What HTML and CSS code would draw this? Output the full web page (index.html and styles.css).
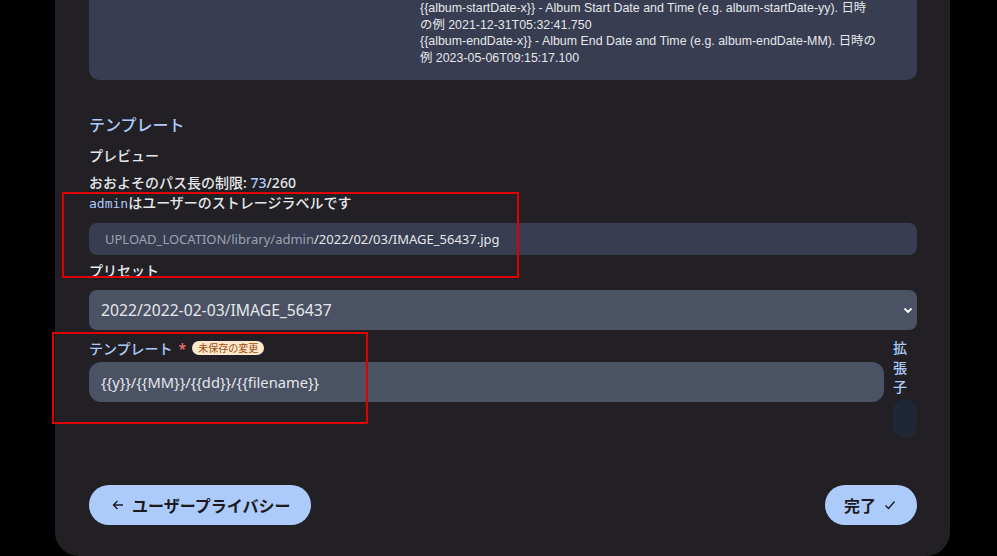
FILE: index.html
```html
<!DOCTYPE html>
<html lang="ja">
<head>
    <meta charset="UTF-8">
    <meta name="viewport" content="width=device-width, initial-scale=1.0">
    <title>ストレージテンプレート</title>
    <link rel="stylesheet" href="styles.css">
</head>
<body>
    <div class="panel">
        <div class="vars">
            <div class="vars-text">
                <p>{{album-startDate-x}} - Album Start Date and Time (e.g. album-startDate-yy). 日時<br>の例 2021-12-31T05:32:41.750</p>
                <p>{{album-endDate-x}} - Album End Date and Time (e.g. album-endDate-MM). 日時の<br>例 2023-05-06T09:15:17.100</p>
            </div>
        </div>

        <h3 class="section-title">テンプレート</h3>
        <p class="label">プレビュー</p>
        <p class="label">おおよそのパス長の制限: <span class="accent">73</span>/260</p>
        <p class="label label-tight"><code class="accent">admin</code>はユーザーのストレージラベルです</p>

        <div class="preview">
            <span class="muted">UPLOAD_LOCATION/library/admin</span>/2022/02/03/IMAGE_56437.jpg
        </div>

        <p class="label preset-label">プリセット</p>
        <div class="select">
            <span>2022/2022-02-03/IMAGE_56437</span>
            <svg width="10" height="10" viewBox="0 0 10 10"><path d="M1.5 3.5 5 7 8.5 3.5" fill="none" stroke="#fff" stroke-width="1.8"/></svg>
        </div>

        <div class="template-row">
            <div class="template-main">
                <div class="template-label">
                    <span class="accent">テンプレート</span>
                    <span class="required">*</span>
                    <span class="badge">未保存の変更</span>
                </div>
                <div class="input">{{y}}/{{MM}}/{{dd}}/{{filename}}</div>
            </div>
            <div class="ext">
                <span class="ext-label">拡張子</span>
                <div class="ext-input"></div>
            </div>
        </div>

        <div class="actions">
            <button class="btn btn-back">
                <svg width="14" height="14" viewBox="0 0 14 14"><path d="M12 7H2.5M6.5 3 2.5 7l4 4" fill="none" stroke="#1b1b1f" stroke-width="1.4"/></svg>
                ユーザープライバシー
            </button>
            <button class="btn btn-done">
                完了
                <svg width="14" height="14" viewBox="0 0 14 14"><path d="M2.5 7.5 5.5 10.5 11.5 3.5" fill="none" stroke="#1b1b1f" stroke-width="1.4"/></svg>
            </button>
        </div>

        <div class="mark mark-preview"></div>
        <div class="mark mark-template"></div>
    </div>
</body>
</html>
```

FILE: styles.css
```css
body {
    margin: 0;
    background: #000;
    font-family: "Noto Sans", "Noto Sans CJK JP", sans-serif;
    color: #e5e7eb;
    overflow: hidden;
}

p {
    margin: 0;
}

.panel {
    position: relative;
    width: 895px;
    height: 556px;
    margin-left: 55px;
    padding: 0 33px 0 34px;
    box-sizing: border-box;
    background: #222024;
    border-radius: 0 0 24px 24px;
}

/* variables card, scrolled so only the bottom shows */
.vars {
    height: 80px;
    padding-left: 331px;
    box-sizing: border-box;
    background: #383d51;
    border-radius: 0 0 10px 10px;
    font-family: "Liberation Sans", "Noto Sans CJK JP", sans-serif;
    font-size: 12.4px;
    line-height: 16.5px;
}

.vars-text {
    white-space: nowrap;
}

.section-title {
    margin: 35px 0 0;
    font-size: 16px;
    font-weight: 500;
    color: #adcbfa;
    line-height: 20px;
}

.label {
    font-size: 14px;
    font-weight: 500;
    line-height: 20px;
    margin-top: 11px;
}

.label + .label {
    margin-top: 7px;
}

.label + .label-tight {
    margin-top: 0;
}

.accent {
    color: #adcbfa;
}

code {
    font-family: "DejaVu Sans Mono", monospace;
    font-size: 13px;
}

.preview {
    margin-top: 9px;
    height: 32px;
    line-height: 32px;
    padding: 0 16px;
    background: #383d51;
    border-radius: 8px;
    font-size: 13px;
}

.muted {
    color: #9ca3af;
}

.preset-label {
    margin-top: 6px;
}

.select {
    display: flex;
    align-items: center;
    justify-content: space-between;
    margin-top: 9px;
    height: 40px;
    padding: 0 4px 0 12px;
    background: #4b5264;
    border-radius: 8px;
    font-size: 15.7px;
}

.template-row {
    display: flex;
    gap: 9px;
    margin-top: 9px;
}

.template-main {
    flex: 1;
}

.template-label {
    display: flex;
    align-items: center;
    gap: 6px;
    height: 18px;
    font-size: 14px;
    font-weight: 500;
}

.required {
    color: #f87171;
}

.badge {
    background: #fde8cc;
    color: #a34a0c;
    font-size: 10px;
    line-height: 14px;
    padding: 0 6px;
    border-radius: 8px;
    font-weight: 400;
}

.input {
    margin-top: 5px;
    height: 40px;
    line-height: 40px;
    padding: 0 12px;
    background: #4b5264;
    border-radius: 12px;
    font-size: 14.7px;
}

.ext {
    width: 24px;
    margin-top: -1px;
}

.ext-label {
    display: block;
    font-size: 14px;
    font-weight: 500;
    line-height: 19.5px;
    color: #adcbfa;
}

.ext-input {
    margin-top: 2px;
    height: 39px;
    background: #1f2737;
    border-radius: 12px;
}

.actions {
    display: flex;
    justify-content: space-between;
    margin-top: 47px;
}

.btn {
    display: flex;
    align-items: center;
    gap: 7px;
    height: 40px;
    padding: 0 21px;
    border: 0;
    border-radius: 20px;
    background: #adcbfa;
    color: #1b1b1f;
    font-family: inherit;
    font-size: 16px;
    font-weight: 600;
}

.btn-back {
    padding: 0 21px 0 22px;
}

.btn-done {
    padding: 0 20px 0 19px;
}

/* red annotation boxes over the screenshot */
.mark {
    position: absolute;
    border: 2px solid #e00000;
    box-sizing: border-box;
}

.mark-preview {
    left: 7px;
    top: 192px;
    width: 457px;
    height: 86px;
}

.mark-template {
    left: -3px;
    top: 332px;
    width: 316px;
    height: 92px;
}
```
